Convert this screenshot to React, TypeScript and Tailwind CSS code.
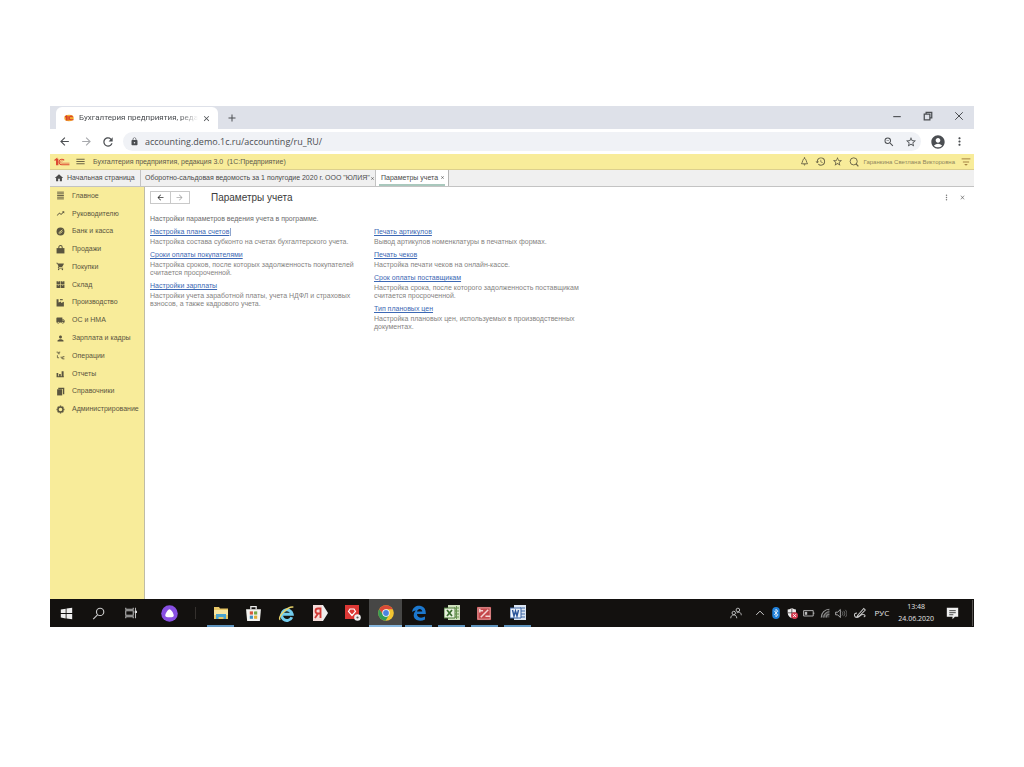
import type { ReactNode } from "react";
import {
  MdArrowBack,
  MdArrowForward,
  MdRefresh,
  MdLock,
  MdStarBorder,
  MdAccountCircle,
  MdMoreVert,
  MdHome,
  MdHistory,
  MdZoomOut,
  MdClose,
  MdAdd,
  MdTrendingUp,
  MdShoppingCart,
  MdLocalShipping,
  MdPerson,
  MdMenu,
} from "react-icons/md";

type IconProps = { className?: string };

function Svg({ children, className = "size-4", box = "0 0 16 16" }: { children: ReactNode; className?: string; box?: string }) {
  return (
    <svg viewBox={box} className={className} fill="none" aria-hidden="true">
      {children}
    </svg>
  );
}

function LinesIcon({ className }: IconProps) {
  return (
    <Svg className={className}>
      <path d="M2 2h12M2 5h12M2 8h12M2 11h12M2 14h12" stroke="currentColor" strokeWidth="1.600" />
    </Svg>
  );
}
function CoinIcon({ className }: IconProps) {
  return (
    <Svg className={className}>
      <circle cx="8" cy="8" r="7" fill="currentColor" />
      <path d="M4.500 10.500l7-5.500M6 12l5.500-4" stroke="#f8ec9a" strokeWidth="1.500" />
    </Svg>
  );
}
function BagIcon({ className }: IconProps) {
  return (
    <Svg className={className}>
      <path d="M1 5.500h14V15H1z" fill="currentColor" />
      <path d="M5 8V4a3 3 0 0 1 6 0v4" stroke="currentColor" strokeWidth="1.800" />
    </Svg>
  );
}
function WarehouseIcon({ className }: IconProps) {
  return (
    <Svg className={className}>
      <path d="M1 2h6.500v5.500H1zM8.500 2H15v5.500H8.500zM1 8.500h6.500V14H1zM8.500 8.500H15V14H8.500z" fill="currentColor" />
      <path d="M4.200 2v2M11.800 2v2M4.200 8.500v2M11.800 8.500v2" stroke="#f8ec9a" />
    </Svg>
  );
}
function FactoryIcon({ className }: IconProps) {
  return (
    <Svg className={className}>
      <path d="M1 15V2h3.500v6L9 6v3l5-2.500V15z" fill="currentColor" />
      <path d="M7 3h5" stroke="currentColor" strokeWidth="2" />
    </Svg>
  );
}
function OperationsIcon({ className }: IconProps) {
  return (
    <Svg className={className}>
      <path d="M1 2h3v3.500M5.500 2v4M5.500 2h2M8 11h2.500v3M12 10v4.500M12 10h3M12 14h3M2.500 7.500v4.500h3" stroke="currentColor" strokeWidth="1.400" />
    </Svg>
  );
}
function ChartIcon({ className }: IconProps) {
  return (
    <Svg className={className}>
      <path d="M1 7h3v6H1zM5.500 9h3v4h-3zM10 4h3.500v9H10zM1 13h13v1.500H1z" fill="currentColor" />
    </Svg>
  );
}
function BooksIcon({ className }: IconProps) {
  return (
    <Svg className={className}>
      <path d="M2 4h9v11H2z" fill="currentColor" />
      <path d="M4 2.500h9.500V13" stroke="currentColor" strokeWidth="2.400" />
    </Svg>
  );
}
function GearIcon({ className }: IconProps) {
  return (
    <Svg className={className}>
      <circle cx="8" cy="8" r="4.500" stroke="currentColor" strokeWidth="2.600" />
      <path d="M8 1v2M8 13v2M1 8h2M13 8h2M3 3l1.500 1.500M11.500 11.500L13 13M13 3l-1.500 1.500M4.500 11.500L3 13" stroke="currentColor" strokeWidth="2.400" />
    </Svg>
  );
}
function BellIcon({ className }: IconProps) {
  return (
    <Svg className={className}>
      <path d="M2.500 12C5 9.500 4.500 3 8 2.500c3.500.5 3 7 5.500 9.500z" stroke="currentColor" strokeWidth="1.600" />
      <path d="M6 13h4l-2 2.500zM7 .5h2V3H7z" fill="currentColor" />
    </Svg>
  );
}
function RoundSearchIcon({ className }: IconProps) {
  return (
    <Svg className={className}>
      <circle cx="7.500" cy="7" r="5.700" stroke="currentColor" strokeWidth="1.500" />
      <path d="M11 10.500l4 4.500" stroke="currentColor" strokeWidth="2" />
    </Svg>
  );
}

function OneCLogo({ className }: IconProps) {
  return (
    <Svg className={className} box="0 0 30 18">
      <path d="M1 6l4-3v12M7 3v12" stroke="#dd4a32" strokeWidth="2.400" />
      <path d="M19 6A5.200 5.200 0 1 0 15 14.200H29" stroke="#dd4a32" strokeWidth="2.200" />
      <path d="M16.700 7.800A2.300 2.300 0 1 0 15 11.200H29" stroke="#e2603f" strokeWidth="1.400" />
    </Svg>
  );
}

const sections: { label: string; Icon: (p: IconProps) => ReactNode }[] = [
  { label: "Главное", Icon: LinesIcon },
  { label: "Руководителю", Icon: MdTrendingUp },
  { label: "Банк и касса", Icon: CoinIcon },
  { label: "Продажи", Icon: BagIcon },
  { label: "Покупки", Icon: MdShoppingCart },
  { label: "Склад", Icon: WarehouseIcon },
  { label: "Производство", Icon: FactoryIcon },
  { label: "ОС и НМА", Icon: MdLocalShipping },
  { label: "Зарплата и кадры", Icon: MdPerson },
  { label: "Операции", Icon: OperationsIcon },
  { label: "Отчеты", Icon: ChartIcon },
  { label: "Справочники", Icon: BooksIcon },
  { label: "Администрирование", Icon: GearIcon },
];

type Setting = { title: string; lines: string[]; focused?: boolean };

const leftSettings: Setting[] = [
  { title: "Настройка плана счетов", lines: ["Настройка состава субконто на счетах бухгалтерского учета."], focused: true },
  { title: "Сроки оплаты покупателями", lines: ["Настройка сроков, после которых задолженность покупателей", "считается просроченной."] },
  { title: "Настройки зарплаты", lines: ["Настройки учета заработной платы, учета НДФЛ и страховых", "взносов, а также кадрового учета."] },
];
const rightSettings: Setting[] = [
  { title: "Печать артикулов", lines: ["Вывод артикулов номенклатуры в печатных формах."] },
  { title: "Печать чеков", lines: ["Настройка печати чеков на онлайн-кассе."] },
  { title: "Срок оплаты поставщикам", lines: ["Настройка срока, после которого задолженность поставщикам", "считается просроченной."] },
  { title: "Тип плановых цен", lines: ["Настройка плановых цен, используемых в производственных", "документах."] },
];

function SettingList({ items }: { items: Setting[] }) {
  return (
    <ul className="flex w-56 flex-col gap-[3px]">
      {items.map((s) => (
        <li key={s.title} className="whitespace-nowrap">
          <div className="flex h-3 items-center">
            <a href="#" className="text-[7px] leading-[8px] text-[#3c68b4] underline">{s.title}</a>
            {s.focused && <span className="ml-px h-2 w-px bg-[#8fa6cf]" />}
          </div>
          <p className="text-[7px] leading-[8px] text-[#85837f]">
            {s.lines.map((l) => (
              <span key={l} className="block">{l}</span>
            ))}
          </p>
        </li>
      ))}
    </ul>
  );
}

function BrowserChrome() {
  return (
    <header className="font-['Open_Sans',sans-serif] text-[#4b4e52]">
      <div className="flex h-[23px] items-end bg-[#dee1e9] pl-[6px]">
        <div className="flex h-[22px] w-[162px] items-center rounded-t-md bg-white pr-[7px] pl-2">
          <Svg className="h-2 w-[10px]" box="0 0 20 16">
            <ellipse cx="10" cy="8" rx="9.500" ry="6.500" fill="#f5ae2f" />
            <path d="M2 6l3-2v9M8 4v9" stroke="#d8402c" strokeWidth="2.400" />
            <path d="M17 6.500A3.500 3.500 0 1 0 14 11.500h5" stroke="#d8402c" strokeWidth="2.400" />
          </Svg>
          <span className="ml-[5px] mask-r-from-85% font-[Roboto,sans-serif] text-[8px] leading-[12px] whitespace-nowrap">
            Бухгалтерия предприятия, реда
          </span>
          <button aria-label="Закрыть вкладку" className="ml-auto"><MdClose className="size-[9px] stroke-current" /></button>
        </div>
        <button aria-label="Новая вкладка" className="mb-[5px] ml-2"><MdAdd className="size-3 stroke-current" /></button>
        <div className="mr-[10px] mb-[8px] ml-auto flex items-center gap-[21px]">
          <button aria-label="Свернуть"><Svg className="size-[10px]"><path d="M2 9h12" stroke="currentColor" strokeWidth="1.800" /></Svg></button>
          <button aria-label="Развернуть">
            <Svg className="size-[10px]"><path d="M2 5h9v9H2zM5 5V2h9v9h-3" stroke="currentColor" strokeWidth="2" /></Svg>
          </button>
          <button aria-label="Закрыть"><Svg className="size-[10px]"><path d="M2 2l12 12M14 2L2 14" stroke="currentColor" strokeWidth="1.600" /></Svg></button>
        </div>
      </div>
      <div className="flex h-[25px] items-center bg-white pr-2 pl-[8px]">
        <button aria-label="Назад"><MdArrowBack className="size-[13px]" /></button>
        <button aria-label="Вперёд" className="ml-[9px] text-[#a7a9ad]"><MdArrowForward className="size-[13px]" /></button>
        <button aria-label="Обновить" className="ml-[8px]"><MdRefresh className="size-[14px]" /></button>
        <div className="ml-[8px] flex h-[19px] flex-1 items-center rounded-full bg-[#f0f2f6] pr-[4px] pl-[7px]">
          <MdLock className="size-[9px]" />
          <input aria-label="Адрес" readOnly value="accounting.demo.1c.ru/accounting/ru_RU/" className="ml-[6px] min-w-0 flex-1 bg-transparent text-[9px] leading-[14px] outline-none" />
          <button aria-label="Масштаб"><MdZoomOut className="size-3" /></button>
          <button aria-label="В закладки" className="ml-[10px]"><MdStarBorder className="size-3" /></button>
        </div>
        <button aria-label="Профиль" className="ml-[9px]"><MdAccountCircle className="size-4" /></button>
        <button aria-label="Меню" className="ml-[7px]"><MdMoreVert className="size-[13px]" /></button>
      </div>
    </header>
  );
}

function AppBar() {
  return (
    <div className="flex h-4 items-center border-b border-[#dccf8d] bg-[#f8ec9a] pr-[3px] pl-1 text-[#6b6547]">
      <OneCLogo className="h-[10px] w-4" />
      <button aria-label="Главное меню" className="ml-[5px]"><MdMenu className="size-[11px]" /></button>
      <h1 className="ml-[7px] text-[7px] leading-[8px] whitespace-nowrap text-[#5d5a4c]">Бухгалтерия предприятия, редакция 3.0&nbsp; (1С:Предприятие)</h1>
      <div className="ml-auto flex items-center gap-[6px]">
        <button aria-label="Уведомления"><BellIcon className="size-[9px]" /></button>
        <button aria-label="История"><MdHistory className="size-[11px]" /></button>
        <button aria-label="Избранное"><MdStarBorder className="size-[11px]" /></button>
        <button aria-label="Поиск"><RoundSearchIcon className="size-[10px]" /></button>
        <span className="-ml-px text-[6px] leading-[8px] whitespace-nowrap text-[#8f855c]">Гаранкина Светлана Викторовна</span>
        <button aria-label="Настройка панели">
          <Svg className="size-[10px]"><path d="M1 3h14M3 8h10" stroke="#a48242" strokeWidth="1.600" /><path d="M5 11h6l-3 3z" fill="#a48242" /></Svg>
        </button>
      </div>
    </div>
  );
}

function PageTabs() {
  return (
    <nav className="flex h-[17px] items-stretch border-b border-[#c3c3c3] bg-[#f0f0f0] text-[7px] leading-[8px] whitespace-nowrap text-[#4a4a4a]">
      <a href="#" className="flex w-[91px] items-center border-r border-[#c3c3c3] pl-[4px]">
        <MdHome className="size-[10px]" />
        <span className="ml-[3px]">Начальная страница</span>
      </a>
      <div className="flex w-[235px] items-center border-r border-[#c3c3c3] pl-1">
        <a href="#">Оборотно-сальдовая ведомость за 1 полугодие 2020 г. ООО "ЮЛИЯ"</a>
        <button aria-label="Закрыть" className="ml-auto"><MdClose className="size-[5px]" /></button>
      </div>
      <div className="flex w-[73px] items-stretch border-r border-[#b5b5b5] bg-white px-[3px]">
        <div className="flex flex-1 items-center border-b-2 border-[#a9c8bd] pt-px pl-[2px]">
          <a href="#">Параметры учета</a>
          <button aria-label="Закрыть" className="ml-auto"><MdClose className="size-[5px]" /></button>
        </div>
      </div>
    </nav>
  );
}

function TaskButton({ label, active, open, children }: { label: string; active?: boolean; open?: boolean; children: ReactNode }) {
  const look = active ? "border-[#85b5dc]" : open ? "border-[#5e93bd]" : "border-transparent";
  return (
    <button aria-label={label} className={`flex w-[33px] ${active ? "bg-[#474746]" : "px-[3px]"}`}>
      <span className={`flex h-[28px] flex-1 items-center justify-center border-b-2 pt-[2px] ${look}`}>{children}</span>
    </button>
  );
}

function Taskbar() {
  return (
    <footer className="flex h-[28px] items-stretch bg-[#13110f] font-['Open_Sans',sans-serif] text-[#e4e4e4]">
      <div className="flex w-[97px] items-stretch justify-between">
        <button aria-label="Пуск" className="flex w-8 items-center justify-center">
          <Svg className="size-[13px]"><path d="M1 3l6-1v5.500H1zM8 1.900L15 1v6.500H8zM1 8.500h6V14l-6-1zM8 8.500h7V15l-7-1z" fill="#eee" /></Svg>
        </button>
        <button aria-label="Поиск" className="flex w-8 items-center justify-center">
          <Svg className="size-[13px]"><circle cx="10" cy="6" r="4.500" stroke="#ccc" strokeWidth="1.400" /><path d="M7 9.500L1.500 15" stroke="#ccc" strokeWidth="1.400" /></Svg>
        </button>
        <button aria-label="Представление задач" className="flex w-8 items-center justify-center">
          <Svg className="size-3"><path d="M1 1v2h10V1M1 5h10v6H1zM1 15v-2h10v2M14 1v14" stroke="#bbb" strokeWidth="1.400" /><path d="M13 5h3v3h-3z" fill="#ddd" /></Svg>
        </button>
      </div>
      <div className="flex w-11 items-center justify-center">
        <button aria-label="Алиса">
          <Svg className="size-[17px]"><circle cx="8" cy="8" r="7.800" fill="#8850e2" /><path d="M8 4c1.500 0 4 4 4 5.800S10 11.500 8 11.500s-4 0-4-1.700S6.500 4 8 4z" fill="#fff" /></Svg>
        </button>
      </div>
      <div className="flex w-[13px] items-center"><span className="ml-1 h-3 w-px bg-[#34302d]" /></div>
      <TaskButton label="Проводник" open>
        <Svg className="size-4"><path d="M1 2h5l1 1.500h8V14H1z" fill="#e9c866" /><path d="M1 5h14v5H1z" fill="#f8e6a0" /><path d="M3 9h10v5h-2.500v-2h-5v2H3z" fill="#4ba5cf" /></Svg>
      </TaskButton>
      <TaskButton label="Магазин">
        <Svg className="size-[17px]"><path d="M5.500 4V1.500h5V4" stroke="#eee" strokeWidth="1.200" /><path d="M1 4h14l-1 11H2z" fill="#f3f3f0" /><path d="M4.500 6h3v3h-3z" fill="#d7573c" /><path d="M8.500 6h3v3h-3z" fill="#75a845" /><path d="M4.500 10h3v3h-3z" fill="#3f8fc2" /><path d="M8.500 10h3v3h-3z" fill="#e0ae35" /></Svg>
      </TaskButton>
      <TaskButton label="Internet Explorer">
        <Svg className="size-[17px]"><path d="M13 11.500A5 5 0 1 1 13.300 8.600H4" stroke="#72cdee" strokeWidth="2.800" /><path d="M2 14C-.5 11 9 1 14.500 2" stroke="#e9d36a" strokeWidth="1.300" /></Svg>
      </TaskButton>
      <TaskButton label="Яндекс">
        <Svg className="size-4"><path d="M1 0h10l5 8-5 8H1z" fill="#eee" /><path d="M1 0h9v16H1z" fill="#f4dcd9" /><path d="M8.500 2.500V13M8.500 3.500H6a2.500 2.500 0 0 0 0 5h2.500M6 8.500L3 13" stroke="#d23a36" strokeWidth="1.800" /></Svg>
      </TaskButton>
      <TaskButton label="Диагностика">
        <Svg className="size-4"><path d="M0 0h14v14H0z" fill="#dc3835" /><path d="M7 10.500L3.500 6.500 5 4h4l1.500 2.500z" stroke="#fff" strokeWidth="1.200" /><circle cx="12.500" cy="12.500" r="3.300" fill="#eee" /><circle cx="12.500" cy="12.500" r="1.100" fill="#555" /></Svg>
      </TaskButton>
      <TaskButton label="Chrome" active>
        <Svg className="size-4"><circle cx="8" cy="8" r="7.800" fill="#f2c431" /><path d="M1.200 4.200A7.800 7.800 0 0 1 14.800 4.200H8L5 9.800z" fill="#da4937" /><path d="M1.200 4.200A7.800 7.800 0 0 0 7.500 15.800L11 10l-6-.5z" fill="#359c56" /><circle cx="8" cy="8" r="3.700" fill="#fff" /><circle cx="8" cy="8" r="2.900" fill="#4a84df" /></Svg>
      </TaskButton>
      <TaskButton label="Edge" open>
        <Svg className="size-4"><path d="M1 7C2 1 7 0 10 1c3.500 1 5 3.800 4.800 8H6c0 4 5 4.500 8 2.500v3C9 17 3 15.500 2.700 10.500 2.500 7.500 5 5.500 5 5.500 3 5.500 1 7 1 7zm5-.5h5.300C11 3 6.500 3 6 6.500z" fill="#1c78ce" /></Svg>
      </TaskButton>
      <TaskButton label="Excel" open>
        <Svg className="size-4"><path d="M4 0h12v15H4z" fill="#cfe0bd" /><path d="M10 3h5M10 6h5M10 9h5M10 12h5M12.500 1v13" stroke="#68954e" /><path d="M0 3h11v10H0z" fill="#e7f0dc" stroke="#4d7b39" /><path d="M3 5l5 6M8 5l-5 6" stroke="#396c2d" strokeWidth="1.700" /></Svg>
      </TaskButton>
      <TaskButton label="Редактор изображений" open>
        <Svg className="size-[15px]"><path d="M0 1h15v14H0z" fill="#c5474b" /><path d="M1 2h13v12H1z" stroke="#dfa09f" /><path d="M4 12l8-8M3 3v4M2.500 5h4M9 11h5" stroke="#f4d6d5" strokeWidth="1.600" /></Svg>
      </TaskButton>
      <TaskButton label="Word" open>
        <Svg className="size-4"><path d="M4 0h12v15H4z" fill="#dce6f3" /><path d="M10 3h5M10 6h5M10 9h5M10 12h5" stroke="#416da9" /><path d="M0 3h11v10H0z" fill="#eef3fa" stroke="#3b64a6" /><path d="M2.500 5l1.500 6 1.500-5L7 11l1.500-6" stroke="#2c559a" strokeWidth="1.400" /></Svg>
      </TaskButton>
      <div className="ml-auto flex items-center">
        <Svg className="size-3"><circle cx="10.500" cy="4" r="2.400" stroke="#bbb" strokeWidth="1.300" /><circle cx="5" cy="8" r="2.300" stroke="#bbb" strokeWidth="1.300" /><path d="M1 15c0-6 8-6 8 0M9 8c3-2 6-1 6 3" stroke="#bbb" strokeWidth="1.300" /></Svg>
        <Svg className="ml-[13px] size-[10px]"><path d="M2 11l6-6 6 6" stroke="#ccc" strokeWidth="1.600" /></Svg>
        <Svg className="ml-[7px] h-3 w-[8px]" box="0 0 10 16"><rect width="10" height="16" rx="5" fill="#2081db" /><path d="M2.500 5l5 5.500L5 13V3l2.500 2.500-5 5" stroke="#fff" /></Svg>
        <Svg className="ml-[7px] size-[11px]"><path d="M1 2c4 0 5-2 6-2s3 2 6 2v5c0 5-4 7-6 8-3-1-6-4-6-8z" fill="#eee" /><path d="M7 0v15M1 7h12" stroke="#332a29" /><circle cx="11" cy="11" r="5" fill="#d63c50" /><path d="M9 9l4 4M13 9l-4 4" stroke="#fff" strokeWidth="1.400" /></Svg>
        <Svg className="ml-[5px] h-2 w-[12px]" box="0 0 20 12"><path d="M1 2h16v9H1zM18 5v3" stroke="#bbb" strokeWidth="1.500" /><path d="M3 4h4v5H3z" fill="#bbb" /></Svg>
        <Svg className="ml-[5px] size-[10px]"><path d="M2 15A13 13 0 0 1 15 2M6 15a9 9 0 0 1 9-9M10 15a5 5 0 0 1 5-5" stroke="#999" strokeWidth="1.700" /><path d="M1 15h14V2z" fill="#777" fillOpacity=".5" /></Svg>
        <Svg className="ml-[5px] h-[11px] w-3" box="0 0 18 16"><path d="M1 6h3l4-4v12l-4-4H1z" stroke="#ccc" strokeWidth="1.200" /><path d="M10.500 5c1.500 2 1.500 4 0 6M13 4c2.200 2.500 2.200 5.500 0 8M15.500 2.500c3 3.500 3 7.500 0 11" stroke="#888" strokeWidth="1.100" /></Svg>
        <Svg className="ml-[7px] size-3"><path d="M5 11L13 2l2 2-8 8-3 1zM4 8c-5 0-4 6 0 6s4-4 8-4 3 3 1 3" stroke="#ccc" strokeWidth="1.400" /></Svg>
        <span className="ml-[9px] text-[8px] leading-[10px]">РУС</span>
        <time className="ml-[9px] text-center text-[7px] leading-[12px]">
          <span className="block">13:48</span>
          <span className="block">24.06.2020</span>
        </time>
        <button aria-label="Центр уведомлений" className="ml-[12px]">
          <Svg className="size-[13px]"><path d="M1 1h14v11h-4l-3 3v-3H1z" fill="#f0f0f0" /><path d="M4 4.500h8M4 7h8M4 9.500h5" stroke="#222" /></Svg>
        </button>
        <span className="mr-px ml-[13px] h-[26px] w-px bg-[#55524f]" />
      </div>
    </footer>
  );
}

export default function App() {
  return (
    <div className="flex min-h-screen flex-col bg-white px-[50px] pt-[106px] pb-[140px] font-['Liberation_Sans',Arial,sans-serif]">
      <BrowserChrome />
      <AppBar />
      <PageTabs />
      <div className="flex flex-1 items-stretch">
        <aside className="w-[95px] border-r border-[#bfbca6] bg-[#f8ec9a]">
          <nav className="grid h-[231px] auto-rows-fr">
            {sections.map(({ label, Icon }) => (
              <a key={label} href="#" className="flex items-center gap-[7px] pl-[6px] text-[7px] leading-[8px] whitespace-nowrap text-[#5a553f]">
                <Icon className="size-[9px] shrink-0" />
                {label}
              </a>
            ))}
          </nav>
        </aside>
        <main className="min-w-0 flex-1 pt-[4px] pl-[5px]">
          <div className="flex items-center pr-2">
            <div className="flex h-[13px] w-10 border border-[#c9c9c9] text-[#333]">
              <button aria-label="Назад" className="flex flex-1 items-center justify-center border-r border-[#c9c9c9]"><MdArrowBack className="size-[9px] stroke-current" /></button>
              <button aria-label="Вперёд" className="flex flex-1 items-center justify-center text-[#aaa]"><MdArrowForward className="size-[9px]" /></button>
            </div>
            <h2 className="ml-[21px] text-[10px] leading-[12px] text-[#3c3c3c]">Параметры учета</h2>
            <button aria-label="Ещё" className="ml-auto text-[#777]"><MdMoreVert className="size-[9px]" /></button>
            <button aria-label="Закрыть" className="ml-[8px] text-[#777]"><MdClose className="size-[7px]" /></button>
          </div>
          <p className="mt-[11px] text-[7px] leading-[8px] text-[#6b6b6b]">Настройки параметров ведения учета в программе.</p>
          <div className="mt-[3px] flex">
            <SettingList items={leftSettings} />
            <SettingList items={rightSettings} />
          </div>
        </main>
      </div>
      <Taskbar />
    </div>
  );
}
